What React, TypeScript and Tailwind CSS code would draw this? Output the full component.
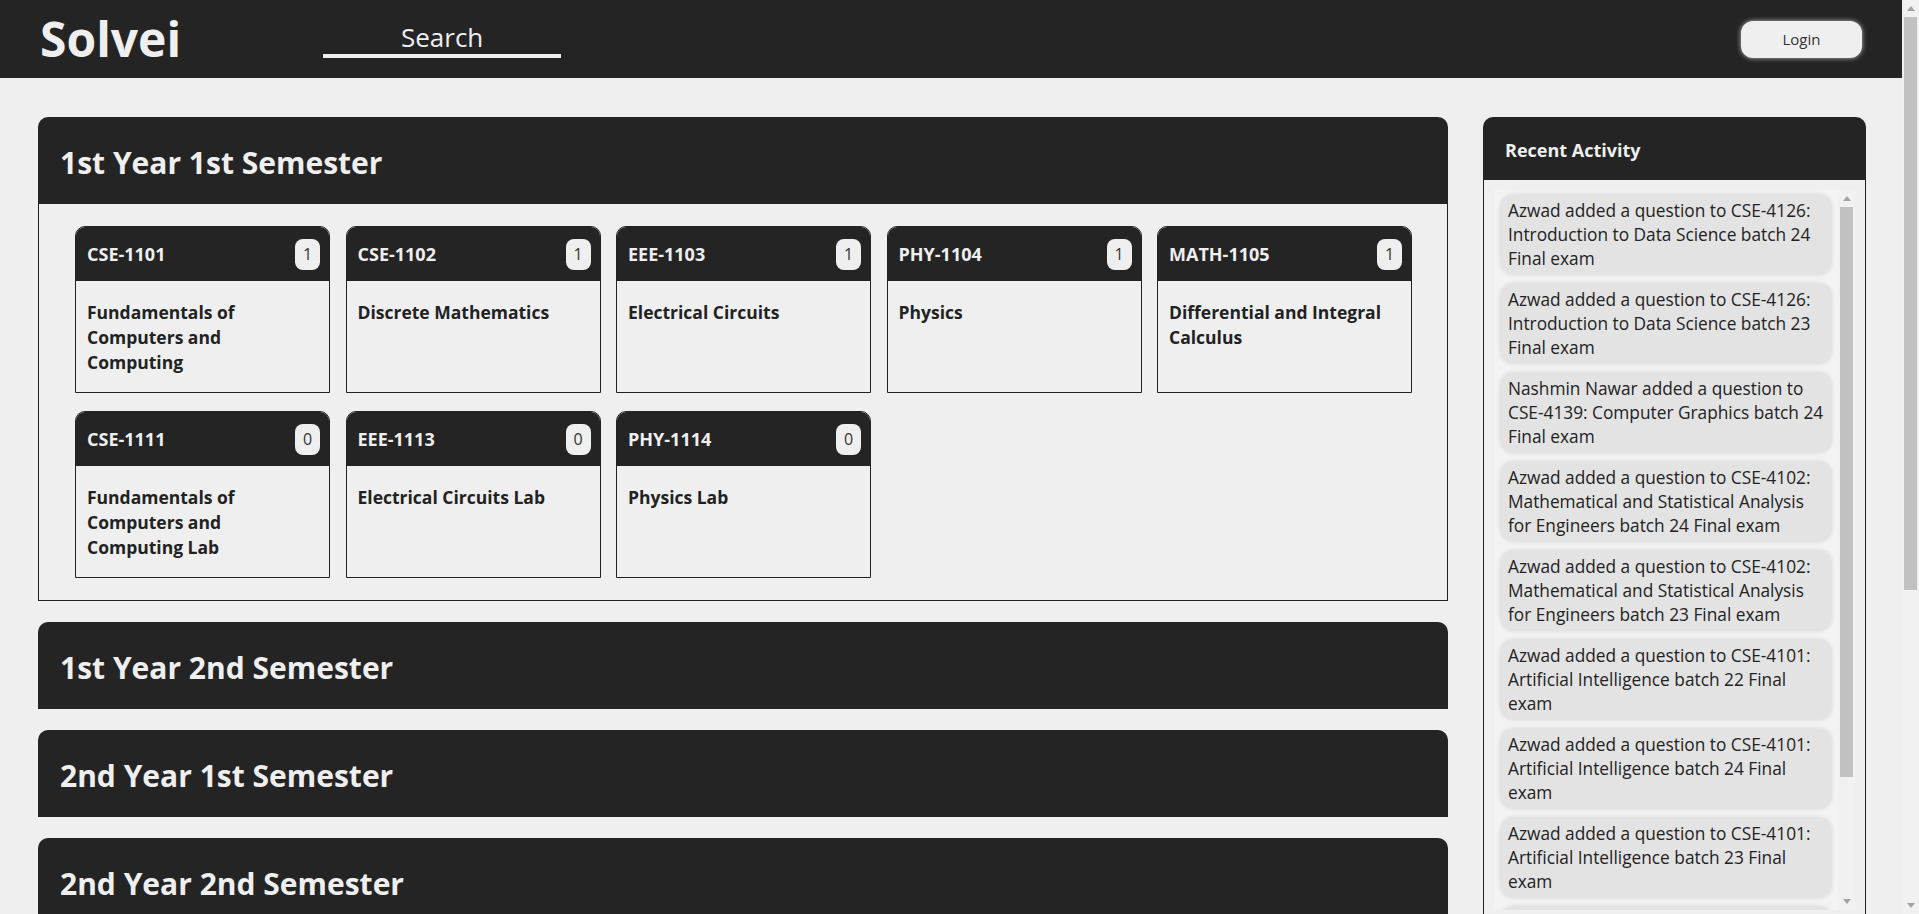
import React from "react";

type Course = { code: string; title: string; count: number };

const firstSemester: Course[] = [
  { code: "CSE-1101", title: "Fundamentals of Computers and Computing", count: 1 },
  { code: "CSE-1102", title: "Discrete Mathematics", count: 1 },
  { code: "EEE-1103", title: "Electrical Circuits", count: 1 },
  { code: "PHY-1104", title: "Physics", count: 1 },
  { code: "MATH-1105", title: "Differential and Integral Calculus", count: 1 },
  { code: "CSE-1111", title: "Fundamentals of Computers and Computing Lab", count: 0 },
  { code: "EEE-1113", title: "Electrical Circuits Lab", count: 0 },
  { code: "PHY-1114", title: "Physics Lab", count: 0 },
];

const otherSemesters = [
  "1st Year 2nd Semester",
  "2nd Year 1st Semester",
  "2nd Year 2nd Semester",
  "3rd Year 1st Semester",
  "3rd Year 2nd Semester",
  "4th Year 1st Semester",
  "4th Year 2nd Semester",
];

const activity = [
  "Azwad added a question to CSE-4126: Introduction to Data Science batch 24 Final exam",
  "Azwad added a question to CSE-4126: Introduction to Data Science batch 23 Final exam",
  "Nashmin Nawar added a question to CSE-4139: Computer Graphics batch 24 Final exam",
  "Azwad added a question to CSE-4102: Mathematical and Statistical Analysis for Engineers batch 24 Final exam",
  "Azwad added a question to CSE-4102: Mathematical and Statistical Analysis for Engineers batch 23 Final exam",
  "Azwad added a question to CSE-4101: Artificial Intelligence batch 22 Final exam",
  "Azwad added a question to CSE-4101: Artificial Intelligence batch 24 Final exam",
  "Azwad added a question to CSE-4101: Artificial Intelligence batch 23 Final exam",
  "Nashmin Nawar added a question to CSE-4139: Computer Graphics batch 23 Final exam",
  "Azwad added a question to CSE-4126: Introduction to Data Science batch 22 Final exam",
];

function Arrow({ down }: { down?: boolean }) {
  return (
    <svg width="8" height="5" viewBox="0 0 8 5">
      <polygon points={down ? "0,0 8,0 4,5" : "0,5 8,5 4,0"} fill="#a3a3a3" />
    </svg>
  );
}

// grey classic scrollbar, thumb height in px
function Scrollbar({ thumb }: { thumb: number }) {
  return (
    <div className="w-[17px] shrink-0 bg-[#f1f1f1] flex flex-col">
      <div className="h-[17px] flex items-center justify-center">
        <Arrow />
      </div>
      <div className="flex-1 px-[2px]">
        <div className="bg-[#c1c1c1]" style={{ height: thumb }} />
      </div>
      <div className="h-[17px] flex items-center justify-center">
        <Arrow down />
      </div>
    </div>
  );
}

function CourseCard({ course }: { course: Course }) {
  return (
    <div className="w-[255px] h-[167px] border border-[#222] rounded-t-[10px] flex flex-col">
      {/* code + question count */}
      <div className="h-[54px] bg-[#242424] rounded-t-[9px] flex items-center justify-between pl-[11px] pr-[9px]">
        <span className="text-[18px] font-bold text-[#efefef]">{course.code}</span>
        <span className="w-[25px] h-[31px] rounded-[8px] bg-[#efefef] text-[#333] text-[16px] flex items-center justify-center">
          {course.count}
        </span>
      </div>
      <div className="flex-1 pl-[11px] pr-[18px] pt-[19px] text-[17.5px] font-bold leading-[25px] text-[#222]">
        {course.title}
      </div>
    </div>
  );
}

function SemesterHeader({ title }: { title: string }) {
  return (
    <div className="h-[87px] bg-[#242424] rounded-t-[10px] flex items-center px-[22px] pt-[3px]">
      <h2 className="text-[30px] font-bold text-[#efefef]">{title}</h2>
    </div>
  );
}

export default function App() {
  return (
    <div className="h-screen flex overflow-hidden bg-[#efefef] font-['Open_Sans',sans-serif]">
      <div className="flex-1 min-w-0 overflow-hidden">
        <header className="h-[78px] bg-[#242424] flex items-center justify-between px-[40px]">
          <div className="flex items-center">
            <span className="text-[48px] font-bold text-[#efefef] leading-none">Solvei</span>
            <input
              placeholder="Search"
              className="ml-[142px] w-[238px] h-[38px] bg-transparent border-b-[4px] border-[#efefef] text-center text-[26px] text-[#efefef] placeholder:text-[#efefef] outline-none"
            />
          </div>
          <button className="w-[121px] h-[37px] rounded-[12px] bg-[#efefef] text-[15px] text-[#333] shadow-[0_0_5px_rgba(255,255,255,0.7)]">
            Login
          </button>
        </header>

        <main className="flex items-start gap-[35px] pl-[38px] pr-[36px] pt-[39px] pb-[40px]">
          {/* semesters */}
          <div className="flex-1 flex flex-col gap-[21px]">
            <section>
              <SemesterHeader title="1st Year 1st Semester" />
              <div className="border border-t-0 border-[#222] pl-[36px] pr-[20px] py-[22px] flex flex-wrap gap-x-[15.5px] gap-y-[18px]">
                {firstSemester.map((c) => (
                  <CourseCard key={c.code} course={c} />
                ))}
              </div>
            </section>
            {otherSemesters.map((s) => (
              <section key={s}>
                <SemesterHeader title={s} />
              </section>
            ))}
          </div>

          {/* recent activity */}
          <aside className="w-[383px] shrink-0">
            <div className="h-[63px] bg-[#242424] rounded-t-[10px] flex items-center pl-[22px] pt-[3px]">
              <h3 className="text-[18px] font-bold text-[#efefef]">Recent Activity</h3>
            </div>
            <div className="border-x border-[#222] pt-[10px] px-[10px] pb-[10px]">
              <div className="h-[720px] flex bg-[#f3f3f3]">
                <div className="flex-1 min-w-0 overflow-hidden pt-[5px] flex flex-col gap-[10px]">
                  {activity.map((a, i) => (
                    <div
                      key={i}
                      className="mx-[7px] shrink-0 rounded-[12px] bg-[#e3e3e3] px-[7px] pt-[4px] pb-[3px] text-[17.3px] leading-[24px] text-[#222] shadow-[0_0_5px_rgba(0,0,0,0.15)]"
                    >
                      {a}
                    </div>
                  ))}
                </div>
                <Scrollbar thumb={570} />
              </div>
            </div>
          </aside>
        </main>
      </div>
      <Scrollbar thumb={573} />
    </div>
  );
}
